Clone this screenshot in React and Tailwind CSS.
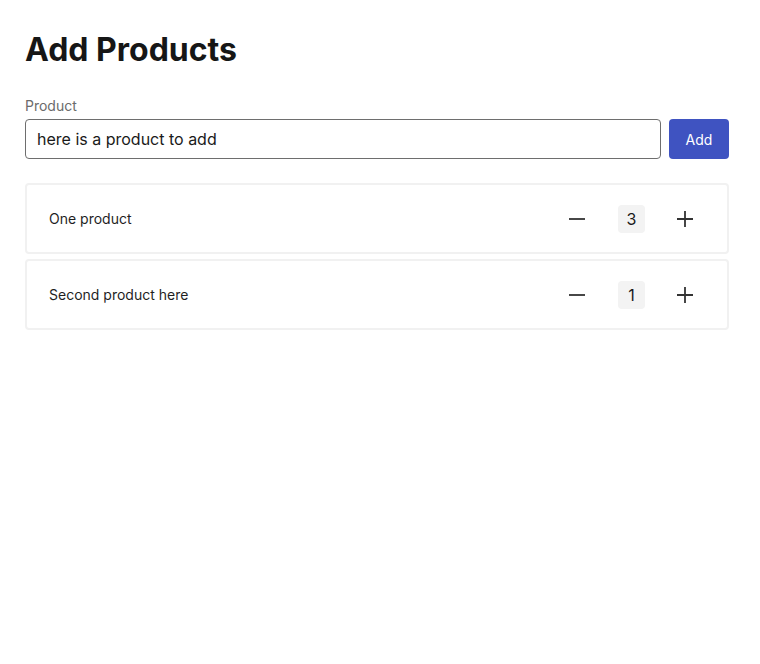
import { useState } from 'react';

function MinusIcon() {
  return (
    <svg width="18" height="18" viewBox="0 0 18 18" fill="none" stroke="currentColor" strokeWidth={1.8}>
      <path d="M1 9h16" />
    </svg>
  );
}

function PlusIcon() {
  return (
    <svg width="18" height="18" viewBox="0 0 18 18" fill="none" stroke="currentColor" strokeWidth={1.8}>
      <path d="M1 9h16M9 1v16" />
    </svg>
  );
}

export default function App() {
  const [text, setText] = useState('here is a product to add');
  const [products, setProducts] = useState([
    { name: 'One product', qty: 3 },
    { name: 'Second product here', qty: 1 },
  ]);

  function changeQty(idx, delta) {
    setProducts(products.map((p, i) => (i === idx ? { ...p, qty: Math.max(0, p.qty + delta) } : p)));
  }

  function addProduct() {
    if (!text.trim()) return;
    setProducts([...products, { name: text, qty: 1 }]);
    setText('');
  }

  return (
    <div className="min-h-screen bg-white px-[25px] pt-[28px] text-[#1a1a1a]" style={{ fontFamily: 'Inter, "Noto Sans", sans-serif' }}>
      <div className="w-[704px]">
        <h1 className="text-[32px] leading-[44px] font-bold text-[#161616]">Add Products</h1>
        <label className="mt-[25px] block text-[14px] leading-[18px] text-[#6b6b6b]">Product</label>
        <div className="mt-[4px] flex gap-2">
          <input
            value={text}
            onChange={(e) => setText(e.target.value)}
            className="h-10 flex-1 rounded-[4px] border border-[#6e6e6e] px-[11px] text-[16px] text-[#1a1a1a] outline-none"
          />
          <button onClick={addProduct} className="h-10 w-[60px] rounded-[4px] bg-[#3f53c1] text-[14px] text-white">
            Add
          </button>
        </div>
        <ul className="mt-[24px] flex flex-col gap-[5px]">
          {products.map((p, idx) => (
            <li key={idx} className="flex h-[71px] items-center rounded-[4px] border-2 border-[#f1f1f1] pl-[22px] pr-[22px]">
              <span className="flex-1 text-[14px] text-[#1f1f1f]">{p.name}</span>
              <div className="flex items-center">
                <button onClick={() => changeQty(idx, -1)} className="mr-[21px] flex h-10 w-10 items-center justify-center text-[#333]">
                  <MinusIcon />
                </button>
                <span className="flex h-[28px] min-w-[27px] items-center justify-center rounded-[4px] bg-[#f3f3f3] px-[7px] text-[16px] text-[#1a1a1a]">
                  {p.qty}
                </span>
                <button onClick={() => changeQty(idx, 1)} className="ml-[20px] flex h-10 w-10 items-center justify-center text-[#333]">
                  <PlusIcon />
                </button>
              </div>
            </li>
          ))}
        </ul>
      </div>
    </div>
  );
}
